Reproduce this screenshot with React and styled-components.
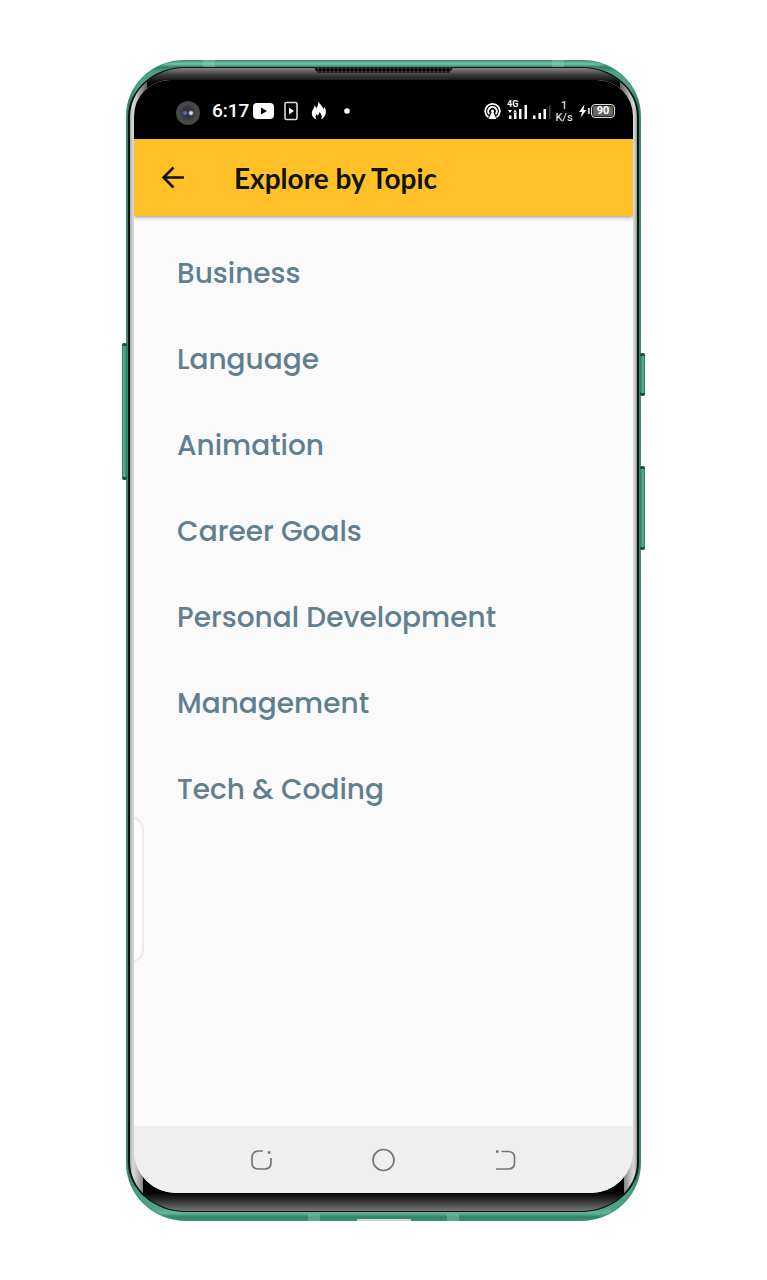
import React from "react";
import styled, { createGlobalStyle } from "styled-components";

const Global = createGlobalStyle`
  *, *::before, *::after { box-sizing: border-box; }
  body { margin: 0; background: #fff; }
`;

const Page = styled.div`
  display: flex;
  flex-direction: column;
  min-height: 100vh;
  padding: 60px 126px 59px;
  font-family: Roboto, "Liberation Sans", sans-serif;
`;

const Frame = styled.div`
  position: relative;
  flex: 1;
  display: flex;
  padding: 7px 2px 9px;
  border-radius: 58px 58px 60px 60px / 56px 56px 58px 58px;
  box-shadow: inset 0 0 1px 1px #3f9078;
  background:
    linear-gradient(#3b9076, #76c2a8 4px, #2d7f67 7px, transparent 12px) top / 100% 12px no-repeat,
    linear-gradient(transparent, #65b59c 5px, #2d846b 9px, #3d927a) bottom / 100% 13px no-repeat,
    linear-gradient(90deg, #4f9c84, #2b7d65 2px, #4fa088 10px, #4fa088 calc(100% - 10px), #2b7d65 calc(100% - 2px), #4f9c84);
`;

const SideKey = styled.span`
  position: absolute;
  ${(p) => p.$side}: -4px;
  top: ${(p) => p.$top}px;
  width: 5px;
  height: ${(p) => p.$height}px;
  border: solid #17503e;
  border-width: 3px 0;
  border-radius: 2px;
  background: linear-gradient(to ${(p) => (p.$side === "left" ? "right" : "left")}, #2a7660, #5fb296 2px, #2a7660);
`;

const AntennaLine = styled.span`
  position: absolute;
  ${(p) => p.$edge}: 0;
  ${(p) => p.$side}: ${(p) => p.$offset}px;
  width: 12px;
  height: 7px;
  background: #8fd0bb66;
`;

const Port = styled.span`
  position: absolute;
  bottom: 0;
  left: 50%;
  width: 54px;
  height: 2px;
  transform: translateX(-50%);
  background: #c4ded6;
`;

const Speaker = styled.span`
  position: absolute;
  top: 7px;
  left: 50%;
  width: 140px;
  height: 6px;
  transform: translateX(-50%);
  clip-path: polygon(0 0, 100% 0, 97% 100%, 3% 100%);
  background:
    radial-gradient(circle, #000 1px, transparent 2px) 0 1px / 4px 4px,
    #333;
`;

const Glass = styled.div`
  flex: 1;
  display: flex;
  min-width: 0;
  padding: 12px 4px 18px;
  border: 1px solid #07150f;
  border-width: 1px 2px;
  border-radius: 57px 57px 58px 58px / 50px 50px 50px 50px;
  background:
    linear-gradient(#858585, #444 6px, #111 13px, #000 15px) top / calc(100% - 34px) 34px no-repeat,
    linear-gradient(#000, #000 17px, #262626 24px, #777) bottom / calc(100% - 26px) 36px no-repeat,
    linear-gradient(90deg, #a9a9a9, #d9d9d9 3px, #c8c8c8 6px, #666 16px, #666 calc(100% - 16px), #c8c8c8 calc(100% - 6px), #d9d9d9 calc(100% - 3px), #999);
`;

const Screen = styled.div`
  flex: 1;
  display: flex;
  flex-direction: column;
  min-width: 0;
  overflow: hidden;
  border-radius: 36px 36px 42px 42px;
  background: #fafafa;
`;

const StatusBar = styled.div`
  display: flex;
  align-items: center;
  justify-content: space-between;
  height: 59px;
  padding: 3px 18px 0 42px;
  background: #000;
  color: #fff;
`;

const StatusGroup = styled.div`
  display: flex;
  align-items: center;
  svg { display: block; }
`;

const Camera = styled.span`
  width: 24px;
  height: 24px;
  margin: 4px 12px 0 0;
  border-radius: 50%;
  background:
    radial-gradient(circle at 9px 12px, #526fbd 1px, transparent 3px),
    radial-gradient(circle at 15px 12px, #dde3ee 1px, transparent 3px),
    radial-gradient(circle, #303036 4px, #4a4a4a 9px, #383838);
`;

const Clock = styled.time`
  width: 41px;
  font-size: 19px;
  font-weight: 500;
  line-height: 24px;
`;

const Signal = styled.span`
  position: relative;
  margin-left: 6px;
`;

const Network = styled.span`
  position: absolute;
  top: -2px;
  left: 0;
  font-size: 9px;
  font-weight: 700;
  line-height: 9px;
`;

const Speed = styled.span`
  display: flex;
  flex-direction: column;
  width: 18px;
  margin: 2px 6px 0 4px;
  font-size: 11px;
  line-height: 12px;
  text-align: center;
`;

const Battery = styled.span`
  width: 24px;
  height: 14px;
  border: 1px solid #ddd;
  border-radius: 4px;
  box-shadow: inset 0 0 0 1px #222;
  background: #666;
  font-size: 11px;
  font-weight: 700;
  line-height: 12px;
  text-align: center;
`;

const AppBar = styled.header`
  position: relative;
  display: flex;
  align-items: center;
  height: 77px;
  padding-left: 22px;
  background: #ffc127;
  box-shadow: 0 1px 4px #0000006b;
`;

const IconButton = styled.button`
  display: flex;
  align-items: center;
  justify-content: center;
  width: 34px;
  height: 34px;
  padding: 0;
  border: 0;
  background: none;
  color: ${(p) => p.$color};
  cursor: pointer;
`;

const Title = styled.h1`
  margin: 0 0 0 44px;
  color: #111;
  font: 700 28px/34px Lato, sans-serif;
  white-space: nowrap;
`;

const Content = styled.main`
  position: relative;
  flex: 1;
`;

const TopicList = styled.ul`
  margin: 0;
  padding: 15px 0 0;
  list-style: none;
`;

const TopicLink = styled.a`
  display: block;
  padding: 0 43px;
  color: #617f8e;
  font: 500 28px/86px Poppins, Inter, sans-serif;
  text-decoration: none;
  white-space: nowrap;
`;

const EdgeHandle = styled.span`
  position: absolute;
  top: 600px;
  left: -6px;
  width: 16px;
  height: 147px;
  border: 2px solid #ececec;
  border-radius: 0 14px 14px 0;
  background: #fefefe;
`;

const NavBar = styled.nav`
  display: flex;
  align-items: center;
  justify-content: center;
  gap: 88px;
  height: 67px;
  background: #efefef;
`;

const topics = [
  "Business",
  "Language",
  "Animation",
  "Career Goals",
  "Personal Development",
  "Management",
  "Tech & Coding",
];

const Notifications = () => (
  <svg width="98" height="24" viewBox="0 0 98 24" aria-hidden="true">
    <rect x="0" y="4" width="21" height="16" rx="4" fill="#fff" />
    <path d="M8 8.500v7l6-3.500z" fill="#000" />
    <rect x="32" y="3.500" width="12" height="17" rx="1.500" fill="none" stroke="#ddd" strokeWidth="1.600" />
    <path d="M36 8.500v7l5-3.500z" fill="#fff" />
    <path d="M65.300 2.500C66.500 5 69.500 7 70.500 10c.6-.7.8-1.500.8-2.300 1.500 2.300 2 4.800 1.300 7.300-.7 2.600-2.500 4.500-4.600 5.300 1.500-2.300 1-4.300-1.500-7.300-.2 2-1.200 2.500-1.800 3.800-.6-.6-.6-1.300-.5-2.100-2 2-2.200 4-.7 5.700-3-.9-4.800-3.500-4.700-6.400.1-3 2.500-4.500 2.700-7.400 1 .8 1.400 1.700 1.500 2.800 1.600-1.800 2.600-4.200 2.300-6.900z" fill="#fff" />
    <circle cx="94" cy="12" r="2.800" fill="#fff" />
  </svg>
);

const Hotspot = () => (
  <svg width="17" height="18" viewBox="0 0 17 18" aria-hidden="true">
    <path d="M4.500 15.300a7.300 7.300 0 1 1 8 0" fill="none" stroke="#fff" strokeWidth="1.800" />
    <path d="M5.300 12.200a4.300 4.300 0 1 1 6.400 0" fill="none" stroke="#fff" strokeWidth="2" />
    <path d="M8.500 8.500 12.500 17h-8z" fill="#fff" />
    <circle cx="8.500" cy="9" r="1.600" fill="#fff" />
  </svg>
);

const Bars = () => (
  <svg width="44" height="18" viewBox="0 0 44 18" aria-hidden="true">
    <g fill="#fff">
      <path d="M2 13.500h2.500V17H2zM7 11h2.500v6H7zM12 7h2.500v10H12zM17.500 3H20v14h-2.500z" />
      <path d="M26 13.500h2.500V17H26zM31.500 11H34v6h-2.500zM36.500 7H39v10h-2.500z" />
      <path d="M1 8h4l-2 3zM6 10.500h4l-2-3z" />
    </g>
    <path d="M42 3h1.500v14H42z" fill="#444" />
  </svg>
);

const Bolt = () => (
  <svg width="12" height="14" viewBox="0 0 12 14" aria-hidden="true">
    <path d="M5.500 0.500 0 8h3L1.500 13.500 7.500 6H4.500z" fill="#fff" />
    <path d="M9.800 4v6" stroke="#ddd" strokeWidth="1.800" />
  </svg>
);

const BackArrow = () => (
  <svg width="24" height="24" viewBox="0 0 24 24" fill="none" stroke="currentColor" strokeWidth="2.600" aria-hidden="true">
    <path d="M12.500 1.500 2.500 11.500l10 10M3 11.500h20" />
  </svg>
);

const navIcons = {
  "Recent apps": (
    <>
      <path d="M13 3H9C4.500 3 2 5.500 2 9.500v5C2 19 4.500 21 8.500 21h6c4.500 0 6.500-2.500 6.500-6.500V10" />
      <path d="M17.800 4.500h2.600" strokeWidth="2.400" />
    </>
  ),
  Home: <circle cx="11.500" cy="12" r="10.500" />,
  Back: (
    <>
      <path d="M7.500 3.500H14c4.500 0 6.500 2 6.500 6V15c0 4-2 6-6.500 6H2" />
      <path d="M2 3.500h2.600" strokeWidth="2.400" />
    </>
  ),
};

export default function App() {
  return (
    <>
      <Global />
      <Page>
        <Frame>
          <SideKey $side="left" $top={283} $height={137} />
          <SideKey $side="right" $top={293} $height={43} />
          <SideKey $side="right" $top={406} $height={84} />
          <AntennaLine $edge="top" $side="left" $offset={77} />
          <AntennaLine $edge="top" $side="right" $offset={77} />
          <AntennaLine $edge="bottom" $side="left" $offset={182} />
          <AntennaLine $edge="bottom" $side="right" $offset={182} />
          <Port />
          <Speaker />
          <Glass>
            <Screen>
              <StatusBar>
                <StatusGroup>
                  <Camera />
                  <Clock>6:17</Clock>
                  <Notifications />
                </StatusGroup>
                <StatusGroup>
                  <Hotspot />
                  <Signal>
                    <Network>4G</Network>
                    <Bars />
                  </Signal>
                  <Speed>
                    <span>1</span>
                    <span>K/s</span>
                  </Speed>
                  <Bolt />
                  <Battery>90</Battery>
                </StatusGroup>
              </StatusBar>
              <AppBar>
                <IconButton $color="#111" aria-label="Go back">
                  <BackArrow />
                </IconButton>
                <Title>Explore by Topic</Title>
              </AppBar>
              <Content>
                <TopicList>
                  {topics.map((topic) => (
                    <li key={topic}>
                      <TopicLink href="#">{topic}</TopicLink>
                    </li>
                  ))}
                </TopicList>
                <EdgeHandle />
              </Content>
              <NavBar>
                {Object.entries(navIcons).map(([name, shape]) => (
                  <IconButton key={name} $color="#757575" aria-label={name}>
                    <svg width="24" height="24" viewBox="0 0 24 24" fill="none" stroke="currentColor" strokeWidth="1.700" aria-hidden="true">
                      {shape}
                    </svg>
                  </IconButton>
                ))}
              </NavBar>
            </Screen>
          </Glass>
        </Frame>
      </Page>
    </>
  );
}
